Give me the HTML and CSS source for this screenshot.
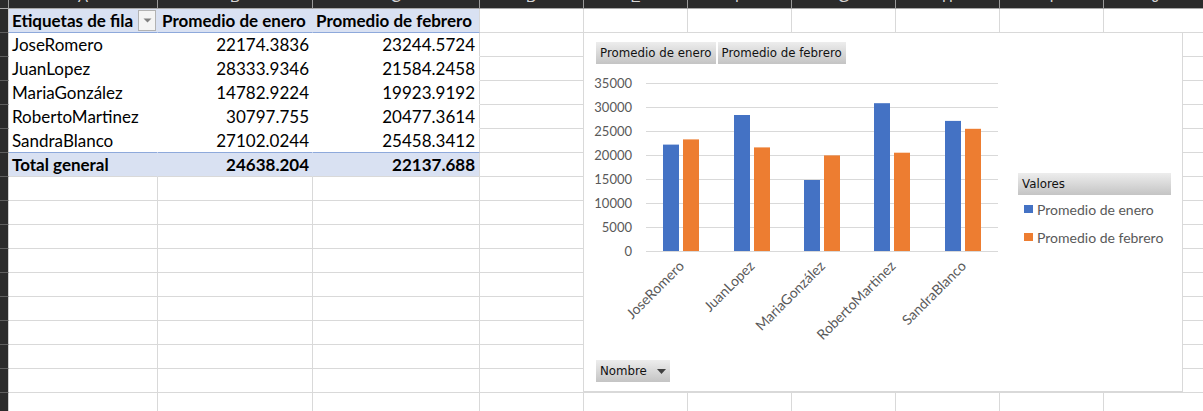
FILE: index.html
```html
<!DOCTYPE html>
<html lang="es">
<head>
<meta charset="utf-8">
<title>Tabla dinámica</title>
<link rel="stylesheet" href="styles.css">
</head>
<body>
<div class="sheet">
  <div class="row hdr">
    <div></div><div><span>A</span></div><div><span>B</span></div><div><span>C</span></div><div><span>D</span></div><div><span>E</span></div><div><span>F</span></div><div><span>G</span></div><div><span>H</span></div><div><span>I</span></div><div><span>J</span></div>
  </div>
  <div class="row">
    <div class="rh"></div>
    <div class="pv head lbl"><span>Etiquetas de fila</span><span class="dd"><svg width="9" height="5" viewBox="0 0 9 5"><path d="M0.5 0.5h8l-4 4z" fill="#808080"/></svg></span></div>
    <div class="pv head">Promedio de enero</div>
    <div class="pv head last">Promedio de febrero</div>
    <div></div><div></div><div></div><div></div><div></div><div></div><div></div>
  </div>
  <div class="row">
    <div class="rh"></div>
    <div class="pv data name">JoseRomero</div><div class="pv data num">22174.3836</div><div class="pv data num last">23244.5724</div>
    <div></div><div></div><div></div><div></div><div></div><div></div><div></div>
  </div>
  <div class="row">
    <div class="rh"></div>
    <div class="pv data name">JuanLopez</div><div class="pv data num">28333.9346</div><div class="pv data num last">21584.2458</div>
    <div></div><div></div><div></div><div></div><div></div><div></div><div></div>
  </div>
  <div class="row">
    <div class="rh"></div>
    <div class="pv data name">MariaGonzález</div><div class="pv data num">14782.9224</div><div class="pv data num last">19923.9192</div>
    <div></div><div></div><div></div><div></div><div></div><div></div><div></div>
  </div>
  <div class="row">
    <div class="rh"></div>
    <div class="pv data name">RobertoMartinez</div><div class="pv data num">30797.755</div><div class="pv data num last">20477.3614</div>
    <div></div><div></div><div></div><div></div><div></div><div></div><div></div>
  </div>
  <div class="row">
    <div class="rh"></div>
    <div class="pv data name end">SandraBlanco</div><div class="pv data num end">27102.0244</div><div class="pv data num last end">25458.3412</div>
    <div></div><div></div><div></div><div></div><div></div><div></div><div></div>
  </div>
  <div class="row">
    <div class="rh"></div>
    <div class="pv total name">Total general</div><div class="pv total num">24638.204</div><div class="pv total num last">22137.688</div>
    <div></div><div></div><div></div><div></div><div></div><div></div><div></div>
  </div>
  <div class="row"><div class="rh"></div><div></div><div></div><div></div><div></div><div></div><div></div><div></div><div></div><div></div><div></div></div>
  <div class="row"><div class="rh"></div><div></div><div></div><div></div><div></div><div></div><div></div><div></div><div></div><div></div><div></div></div>
  <div class="row"><div class="rh"></div><div></div><div></div><div></div><div></div><div></div><div></div><div></div><div></div><div></div><div></div></div>
  <div class="row"><div class="rh"></div><div></div><div></div><div></div><div></div><div></div><div></div><div></div><div></div><div></div><div></div></div>
  <div class="row"><div class="rh"></div><div></div><div></div><div></div><div></div><div></div><div></div><div></div><div></div><div></div><div></div></div>
  <div class="row"><div class="rh"></div><div></div><div></div><div></div><div></div><div></div><div></div><div></div><div></div><div></div><div></div></div>
  <div class="row"><div class="rh"></div><div></div><div></div><div></div><div></div><div></div><div></div><div></div><div></div><div></div><div></div></div>
  <div class="row"><div class="rh"></div><div></div><div></div><div></div><div></div><div></div><div></div><div></div><div></div><div></div><div></div></div>
  <div class="row"><div class="rh"></div><div></div><div></div><div></div><div></div><div></div><div></div><div></div><div></div><div></div><div></div></div>
  <div class="row"><div class="rh"></div><div></div><div></div><div></div><div></div><div></div><div></div><div></div><div></div><div></div><div></div></div>

  <div class="chart">
    <div class="fields">
      <span class="fbtn">Promedio de enero</span><span class="fbtn">Promedio de febrero</span>
    </div>
    <div class="chart-body">
      <svg class="plot" width="426" height="295" viewBox="0 0 426 295">
        <g class="grid" stroke="#d9d9d9" stroke-width="1">
          <line x1="62" x2="414" y1="19.5" y2="19.5"/>
          <line x1="62" x2="414" y1="43.5" y2="43.5"/>
          <line x1="62" x2="414" y1="67.5" y2="67.5"/>
          <line x1="62" x2="414" y1="91.5" y2="91.5"/>
          <line x1="62" x2="414" y1="115.5" y2="115.5"/>
          <line x1="62" x2="414" y1="139.5" y2="139.5"/>
          <line x1="62" x2="414" y1="163.5" y2="163.5"/>
          <line x1="62" x2="414" y1="187.5" y2="187.5"/>
        </g>
        <g class="ylab" text-anchor="end">
          <text x="48" y="24">35000</text>
          <text x="48" y="48">30000</text>
          <text x="48" y="72">25000</text>
          <text x="48" y="96">20000</text>
          <text x="48" y="120">15000</text>
          <text x="48" y="144">10000</text>
          <text x="48" y="168">5000</text>
          <text x="48" y="192">0</text>
        </g>
        <g fill="#4472c4">
          <rect x="79" y="80.6" width="16" height="106.4"/>
          <rect x="150" y="51" width="16" height="136"/>
          <rect x="220" y="116" width="16" height="71"/>
          <rect x="290" y="39.2" width="16" height="147.8"/>
          <rect x="361" y="56.9" width="16" height="130.1"/>
        </g>
        <g fill="#ed7d31">
          <rect x="99" y="75.4" width="16" height="111.6"/>
          <rect x="170" y="83.4" width="16" height="103.6"/>
          <rect x="240" y="91.4" width="16" height="95.6"/>
          <rect x="310" y="88.7" width="16" height="98.3"/>
          <rect x="381" y="64.8" width="16" height="122.2"/>
        </g>
        <g class="xlab" text-anchor="end">
          <text transform="translate(101 203) rotate(-45)">JoseRomero</text>
          <text transform="translate(171.5 203) rotate(-45)">JuanLopez</text>
          <text transform="translate(242 203) rotate(-45)">MariaGonzález</text>
          <text transform="translate(312.5 203) rotate(-45)">RobertoMartinez</text>
          <text transform="translate(383 203) rotate(-45)">SandraBlanco</text>
        </g>
      </svg>
      <div class="legend">
        <div class="legend-title">Valores</div>
        <div class="legend-item"><i class="sw blue"></i>Promedio de enero</div>
        <div class="legend-item"><i class="sw orange"></i>Promedio de febrero</div>
      </div>
    </div>
    <div class="axis-field">
      <span class="fbtn nombre">Nombre<svg width="9" height="5" viewBox="0 0 9 5"><path d="M0 0h9l-4.5 5z" fill="#404040"/></svg></span>
    </div>
  </div>
</div>
</body>
</html>
```
FILE: styles.css
```css
html, body {
  margin: 0;
  padding: 0;
  background: #ffffff;
  overflow: hidden;
}

body {
  font-family: Lato, "Liberation Sans", sans-serif;
  color: #000;
}

.sheet {
  position: relative;
  width: 1203px;
  height: 411px;
  overflow: hidden;
}

.row {
  display: grid;
  grid-template-columns: 9px 149px 155px 167px repeat(7, 104px);
  height: 24px;
}

.row > div {
  box-sizing: border-box;
  border-right: 1px solid #d9d9d9;
  border-bottom: 1px solid #d9d9d9;
  overflow: hidden;
  white-space: nowrap;
}

/* column header strip */
.row.hdr {
  height: 9px;
}

.row.hdr > div {
  background: #2b2b2b;
  border-right-color: #9a9a9a;
  border-bottom-color: #a8a8a8;
  text-align: center;
  color: #d6d6d6;
  font-family: "Liberation Sans", sans-serif;
  font-size: 15px;
  line-height: 15px;
}

.row.hdr > div span {
  display: block;
  margin-top: -11px;
}

/* row header strip */
.row > .rh {
  background: #2b2b2b;
  border-right-color: #cfcfcf;
  border-bottom-color: #5e5e5e;
}

/* pivot table */
.pv {
  font-size: 17px;
  line-height: 23px;
}

.pv.head {
  background: #d9e1f2;
  font-weight: 700;
  border-right-color: #d9e1f2;
  border-bottom-color: #8ea9db;
  padding-left: 4px;
}

.pv.head.lbl {
  display: flex;
  justify-content: space-between;
  align-items: flex-start;
  padding-left: 3px;
  padding-right: 1px;
}

.pv.head.last {
  padding-left: 3px;
  border-right-color: #d9d9d9;
}

.dd {
  box-sizing: border-box;
  margin-top: 1px;
  width: 18px;
  height: 21px;
  border: 1px solid #b2b2b2;
  background: #f4f4f4;
  display: flex;
  align-items: center;
  justify-content: center;
}

.pv.data {
  border-right-color: #ffffff;
  border-bottom-color: #ffffff;
}

.pv.data.end {
  border-bottom-color: #8ea9db;
}

.pv.name {
  padding-left: 3px;
}

.pv.num {
  text-align: right;
  padding-right: 3px;
}

.pv.num.last {
  padding-right: 4px;
  border-right-color: #d9d9d9;
}

.pv.total {
  background: #d9e1f2;
  font-weight: 700;
  border-right-color: #d9e1f2;
}

.pv.total.last {
  border-right-color: #d9d9d9;
}

/* chart overlay */
.chart {
  position: absolute;
  left: 583px;
  top: 32px;
  width: 600px;
  height: 360px;
  box-sizing: border-box;
  border: 1px solid #d9d9d9;
  background: #ffffff;
  display: flex;
  flex-direction: column;
}

.fields {
  display: flex;
  gap: 2px;
  padding: 9px 0 0 12px;
  height: 22px;
}

.fbtn {
  display: inline-flex;
  align-items: center;
  height: 22px;
  box-sizing: border-box;
  padding: 0 4px;
  background: linear-gradient(#ededed, #c4c4c4);
  font-family: "DejaVu Sans", sans-serif;
  font-size: 11.8px;
  color: #111;
  white-space: nowrap;
}

.chart-body {
  display: flex;
  height: 295px;
}

.plot {
  display: block;
  flex: none;
}

.ylab text {
  font-family: Lato, "Liberation Sans", sans-serif;
  font-size: 13px;
  fill: #595959;
}

.xlab text {
  font-family: Lato, "Liberation Sans", sans-serif;
  font-size: 14px;
  fill: #595959;
}

.legend {
  margin: 109px 0 0 8px;
  width: 153px;
  display: flex;
  flex-direction: column;
}

.legend-title {
  height: 22px;
  box-sizing: border-box;
  padding-left: 4px;
  display: flex;
  align-items: center;
  background: linear-gradient(#ededed, #c4c4c4);
  font-family: "DejaVu Sans", sans-serif;
  font-size: 11.8px;
  color: #111;
}

.legend-item {
  height: 28px;
  display: flex;
  align-items: center;
  gap: 4px;
  padding-left: 6px;
  font-size: 14px;
  color: #595959;
}

.sw {
  display: block;
  width: 9px;
  height: 8px;
}

.sw.blue { background: #4472c4; }
.sw.orange { background: #ed7d31; }

.axis-field {
  padding-left: 12px;
}

.fbtn.nombre {
  width: 74px;
  gap: 10px;
}
```
